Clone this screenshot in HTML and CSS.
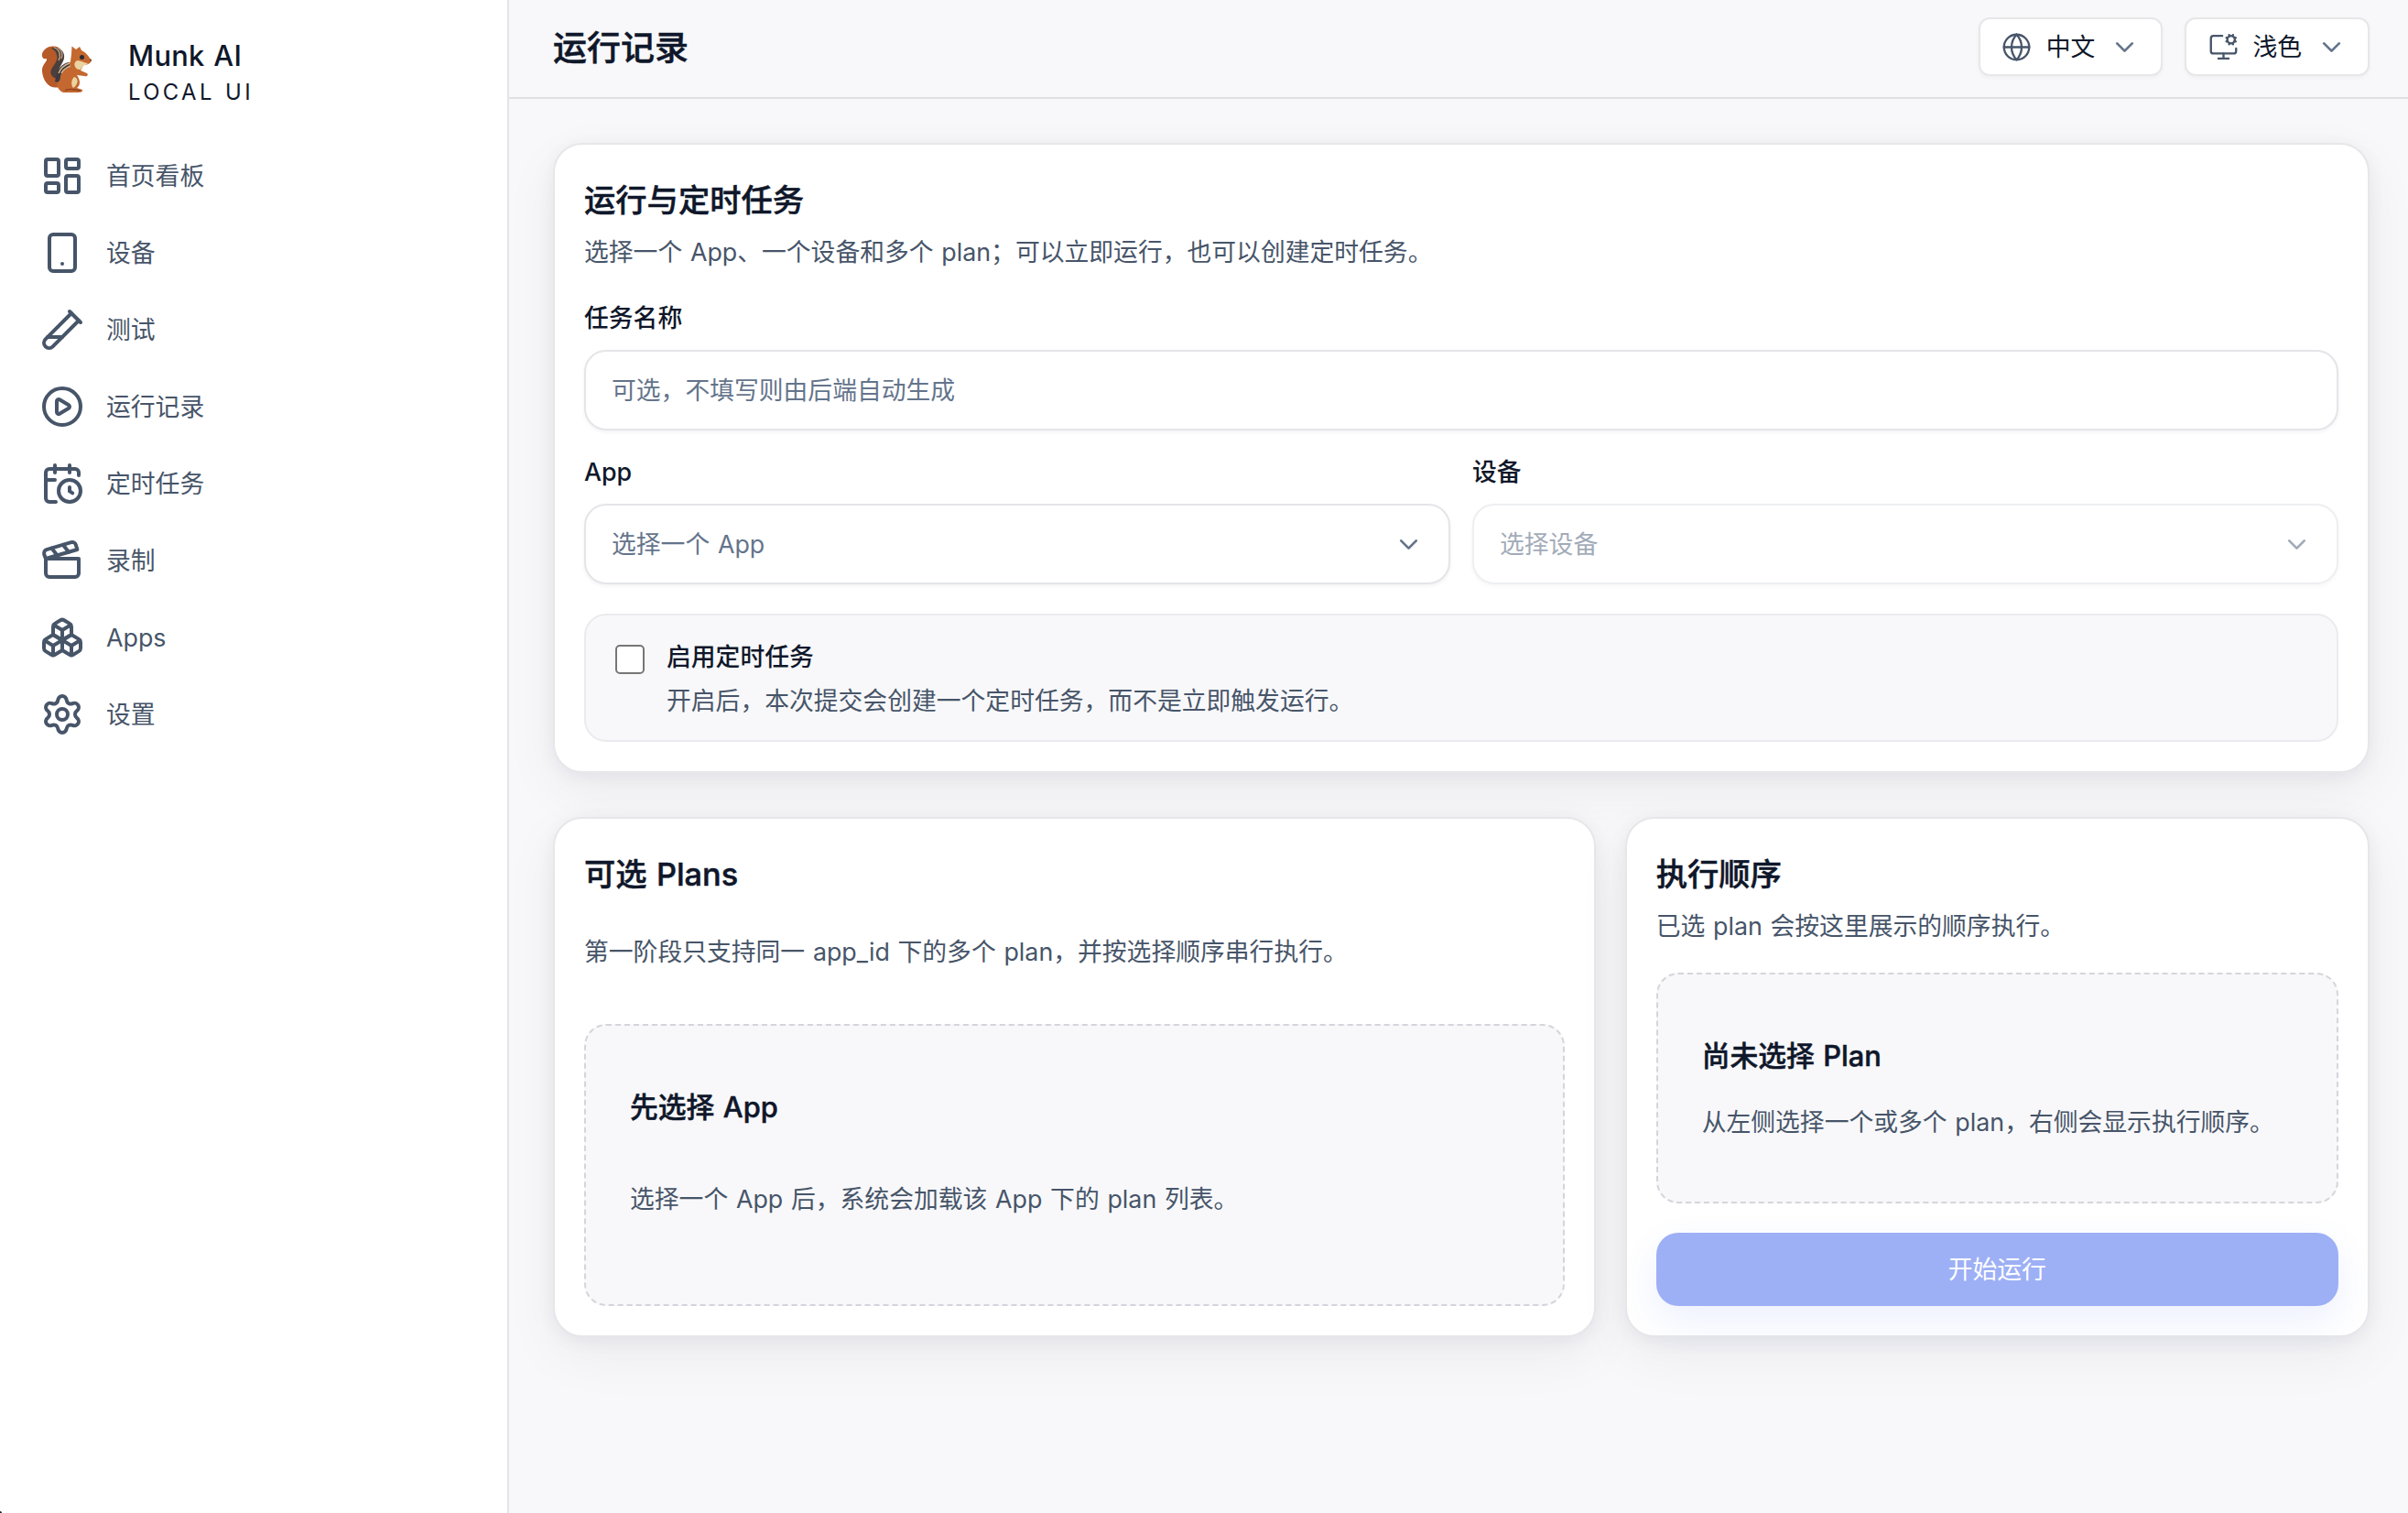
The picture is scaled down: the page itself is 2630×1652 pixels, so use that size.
FILE: index.html
```html
<!DOCTYPE html>
<html lang="zh-CN">
<head>
<meta charset="utf-8">
<title>Munk AI</title>
<link rel="stylesheet" href="styles.css">
</head>
<body>
<div class="app">
  <aside class="sidebar">
    <div class="brand">
      <svg class="brand-logo" viewBox="0 0 60 60">
        <path d="M23 49C12 52 5 43 4 32C3 25 10 21 9 18C4 20 2 13 6 9C11 3 22 3 26 10C30 17 24 24 20 31C17 38 22 42 23 49Z" fill="#b65a2a"/>
        <path d="M14 7C20 4 27 8 28 14C29 21 24 24 22 31L21 40C15 39 12 35 14 30C17 24 22 20 20 14C19 10 17 8 14 7Z" fill="#4a3f3c"/>
        <path d="M17 6C23 8 25 14 22 20M21 6C26 9 27 14 25 18" fill="none" stroke="#c9a98a" stroke-width="1.3"/>
        <path d="M36 13L36.500 4.500L41 8L45 5L47 9C52 11 55 16 58 20C57 24 52 25 49 25L46 31L53 34C55 36 53 38 50 37L42 36C46 42 46 47 42 50L48 52C49 55 44 55 40 55H27C20 52 19 45 22 38C25 29 33 26 35 21Z" fill="#c4682f"/>
        <path d="M42 20C47 20 50 23 54 23C51 26 48 25 46 30C41 31 38 25 40 22ZM39 38C44 39 44 46 38 50C35 46 36 41 39 38Z" fill="#ecd2a0"/>
        <path d="M34 22C28 22 22 28 20 34L18 43C22 45 24 42 24 37C26 31 31 29 34 27Z" fill="#3d3a40"/>
        <path d="M34 23C28 25 24 29 22 34M35 26C30 28 27 30 25 34" fill="none" stroke="#d9b58c" stroke-width="1.400"/>
        <path d="M29 53C33 50 39 52 46 53" fill="none" stroke="#8f431f" stroke-width="1.500"/>
        <circle cx="47.500" cy="16.500" r="2.500" fill="#2a2b35"/>
        <circle cx="57" cy="19.500" r="1" fill="#5f3b30"/>
      </svg>
      <div class="brand-text">
        <div class="brand-name">Munk AI</div>
        <div class="brand-sub">LOCAL UI</div>
      </div>
    </div>
    <nav class="nav">
      <a class="nav-item"><svg class="icon" viewBox="0 0 24 24"><rect width="7" height="9" x="3" y="3" rx="1"/><rect width="7" height="5" x="14" y="3" rx="1"/><rect width="7" height="9" x="14" y="12" rx="1"/><rect width="7" height="5" x="3" y="16" rx="1"/></svg><span>首页看板</span></a>
      <a class="nav-item"><svg class="icon" viewBox="0 0 24 24"><rect width="14" height="20" x="5" y="2" rx="2"/><path d="M12 18h.01"/></svg><span>设备</span></a>
      <a class="nav-item"><svg class="icon" viewBox="0 0 24 24"><path d="M21 7 6.820 21.180a2.830 2.830 0 0 1-3.990-.010a2.830 2.830 0 0 1 0-4L17 3"/><path d="m16 2 6 6"/><path d="M12 16H4"/></svg><span>测试</span></a>
      <a class="nav-item"><svg class="icon" viewBox="0 0 24 24"><circle cx="12" cy="12" r="10"/><path d="M9 9.003a1 1 0 0 1 1.517-.859l4.997 2.997a1 1 0 0 1 0 1.718l-4.997 2.997A1 1 0 0 1 9 14.996z"/></svg><span>运行记录</span></a>
      <a class="nav-item"><svg class="icon" viewBox="0 0 24 24"><path d="M16 14v2.200l1.600 1"/><path d="M16 2v4"/><path d="M21 7.500V6a2 2 0 0 0-2-2H5a2 2 0 0 0-2 2v14a2 2 0 0 0 2 2h3.500"/><path d="M3 10h5"/><path d="M8 2v4"/><circle cx="16" cy="16" r="6"/></svg><span>定时任务</span></a>
      <a class="nav-item"><svg class="icon" viewBox="0 0 24 24"><path d="M20.200 6 3 11l-.900-2.400c-.300-1.100.300-2.200 1.300-2.500l13.500-4c1.100-.300 2.200.300 2.500 1.300Z"/><path d="m6.200 5.300 3.100 3.900"/><path d="m12.400 3.400 3.100 4"/><path d="M3 11h18v8a2 2 0 0 1-2 2H5a2 2 0 0 1-2-2Z"/></svg><span>录制</span></a>
      <a class="nav-item"><svg class="icon" viewBox="0 0 24 24"><path d="M2.970 12.920A2 2 0 0 0 2 14.630v3.240a2 2 0 0 0 .970 1.710l3 1.800a2 2 0 0 0 2.060 0L12 19v-5.500l-5-3-4.030 2.420Z"/><path d="m7 16.500-4.740-2.850"/><path d="m7 16.500 5-3"/><path d="M7 16.500v5.170"/><path d="M12 13.500V19l3.970 2.380a2 2 0 0 0 2.060 0l3-1.800a2 2 0 0 0 .970-1.710v-3.240a2 2 0 0 0-.970-1.710L17 10.500l-5 3Z"/><path d="m17 16.500-5-3"/><path d="m17 16.500 4.740-2.850"/><path d="M17 16.500v5.170"/><path d="M7.970 4.420A2 2 0 0 0 7 6.130v4.370l5 3 5-3V6.130a2 2 0 0 0-.970-1.710l-3-1.800a2 2 0 0 0-2.060 0l-3 1.800Z"/><path d="M12 8 7.260 5.150"/><path d="m12 8 4.740-2.850"/><path d="M12 13.500V8"/></svg><span>Apps</span></a>
      <a class="nav-item"><svg class="icon" viewBox="0 0 24 24"><path d="M9.671 4.136a2.340 2.340 0 0 1 4.659 0 2.340 2.340 0 0 0 3.319 1.915 2.340 2.340 0 0 1 2.330 4.033 2.340 2.340 0 0 0 0 3.831 2.340 2.340 0 0 1-2.330 4.033 2.340 2.340 0 0 0-3.319 1.915 2.340 2.340 0 0 1-4.659 0 2.340 2.340 0 0 0-3.320-1.915 2.340 2.340 0 0 1-2.330-4.033 2.340 2.340 0 0 0 0-3.831A2.340 2.340 0 0 1 6.350 6.051a2.340 2.340 0 0 0 3.319-1.915"/><circle cx="12" cy="12" r="3"/></svg><span>设置</span></a>
    </nav>
  </aside>
  <div class="main">
    <header class="topbar">
      <h1 class="page-title">运行记录</h1>
      <div class="topbar-actions">
        <div class="picker"><svg class="icon icon-sm" viewBox="0 0 24 24"><circle cx="12" cy="12" r="10"/><path d="M12 2a14.500 14.500 0 0 0 0 20 14.500 14.500 0 0 0 0-20"/><path d="M2 12h20"/></svg><span>中文</span><svg class="icon icon-sm chevron" viewBox="0 0 24 24"><path d="m6 9 6 6 6-6"/></svg></div>
        <div class="picker"><svg class="icon icon-sm" viewBox="0 0 24 24"><path d="M12 17v4"/><path d="m14.305 7.530.923-.382"/><path d="m15.228 4.852-.923-.383"/><path d="m16.852 3.228-.383-.924"/><path d="m16.852 8.772-.383.923"/><path d="m19.148 3.228.383-.924"/><path d="m19.530 9.696-.382-.924"/><path d="m20.772 4.852.924-.383"/><path d="m20.772 7.148.924.383"/><path d="M22 13v2a2 2 0 0 1-2 2H4a2 2 0 0 1-2-2V5a2 2 0 0 1 2-2h7"/><path d="M8 21h8"/><circle cx="18" cy="6" r="3"/></svg><span>浅色</span><svg class="icon icon-sm chevron" viewBox="0 0 24 24"><path d="m6 9 6 6 6-6"/></svg></div>
      </div>
    </header>
    <main class="content">
      <section class="card">
        <h2 class="card-title">运行与定时任务</h2>
        <p class="text">选择一个 App、一个设备和多个 plan；可以立即运行，也可以创建定时任务。</p>
        <div class="field">
          <div class="label">任务名称</div>
          <div class="control">可选，不填写则由后端自动生成</div>
        </div>
        <div class="field-row">
          <div class="field">
            <div class="label">App</div>
            <div class="control"><span>选择一个 App</span><svg class="icon icon-sm chevron" viewBox="0 0 24 24"><path d="m6 9 6 6 6-6"/></svg></div>
          </div>
          <div class="field">
            <div class="label">设备</div>
            <div class="control disabled"><span>选择设备</span><svg class="icon icon-sm chevron" viewBox="0 0 24 24"><path d="m6 9 6 6 6-6"/></svg></div>
          </div>
        </div>
        <div class="notice">
          <span class="checkbox"></span>
          <div>
            <div class="notice-title">启用定时任务</div>
            <div class="notice-text">开启后，本次提交会创建一个定时任务，而不是立即触发运行。</div>
          </div>
        </div>
      </section>
      <div class="columns">
        <section class="card">
          <h2 class="card-title">可选 Plans</h2>
          <p class="text text-spaced">第一阶段只支持同一 app_id 下的多个 plan，并按选择顺序串行执行。</p>
          <div class="empty empty-tall">
            <h3 class="empty-title">先选择 App</h3>
            <p class="text">选择一个 App 后，系统会加载该 App 下的 plan 列表。</p>
          </div>
        </section>
        <section class="card">
          <h2 class="card-title">执行顺序</h2>
          <p class="text">已选 plan 会按这里展示的顺序执行。</p>
          <div class="empty">
            <h3 class="empty-title">尚未选择 Plan</h3>
            <p class="text">从左侧选择一个或多个 plan，右侧会显示执行顺序。</p>
          </div>
          <div class="submit">开始运行</div>
        </section>
      </div>
    </main>
  </div>
</div>
</body>
</html>
```
FILE: styles.css
```css
* { box-sizing: border-box; }
body {
  margin: 0;
  font-family: Inter, "Noto Sans CJK SC", sans-serif;
  font-size: 26.8px;
  line-height: 40px;
  word-spacing: 1.2px;
  color: #0f172a;
  background: #f8f8fa;
}
h1, h2, h3, p { margin: 0; }
.app { position: relative; display: flex; height: 1652px; overflow: hidden; }
/* Dark window corner */
.app::after {
  content: "";
  position: absolute;
  left: 0;
  bottom: 0;
  width: 2px;
  height: 2px;
  background: #1d1d35;
  border-top-right-radius: 2px;
}
.icon {
  display: block;
  flex: none;
  width: 48px;
  height: 48px;
  fill: none;
  stroke: currentColor;
  stroke-width: 2;
  stroke-linecap: round;
  stroke-linejoin: round;
}
.icon-sm { width: 33px; height: 33px; margin: 0 -0.5px; stroke-width: 1.7; }
.chevron { color: #64748b; stroke-width: 2; }

/* Sidebar */
.sidebar {
  flex: none;
  width: 556px;
  padding: 36px 42px;
  background: #fff;
  border-right: 2px solid #e4e4e7;
}
.brand { display: flex; height: 114px; }
.brand-logo { width: 60px; height: 60px; margin: 10px 38px 0 0; }
.brand-name { font-size: 30.8px; line-height: 50px; font-weight: 500; letter-spacing: 0.3px; }
.brand-sub { font-size: 23.8px; line-height: 30px; letter-spacing: 3.4px; }
.nav { color: #475569; }
.nav-item { display: flex; align-items: center; gap: 24px; height: 84px; padding-left: 2px; }

/* Top bar */
.main { flex: 1; min-width: 0; }
.topbar {
  display: flex;
  align-items: center;
  justify-content: space-between;
  height: 108px;
  padding: 0 42px 0 48px;
  border-bottom: 2px solid #e1e1e5;
}
.page-title, .card-title, .empty-title {
  font-weight: 500;
  -webkit-text-stroke: 0.5px currentColor;
}
.page-title { font-size: 37px; line-height: 56px; }
.topbar-actions { display: flex; gap: 24px; padding-bottom: 4px; }
.picker {
  display: flex;
  align-items: center;
  gap: 16px;
  height: 64px;
  padding: 0 24px;
  background: #fff;
  border: 2px solid #e7e7ea;
  border-radius: 12px;
  box-shadow: 0 2px 4px rgba(15, 23, 42, 0.04);
}
.picker .icon:first-child { color: #475569; }

/* Cards */
.content { padding: 48px 42px 0 48px; }
.card {
  padding: 32px;
  background: #fff;
  border: 2px solid #e7e7ea;
  border-radius: 32px;
  box-shadow: 0 20px 60px rgba(15, 15, 60, 0.055), 0 4px 20px rgba(15, 15, 50, 0.055);
}
.card-title { font-size: 34.3px; line-height: 58px; }
.text { line-height: 54px; color: #475569; white-space: nowrap; }
.columns { display: grid; grid-template-columns: 1.4fr 1fr; gap: 32px; margin-top: 48px; }

/* Form */
.field { margin-top: 24px; }
.field-row { display: grid; grid-template-columns: 1fr 1fr; gap: 24px; }
.label { line-height: 42px; font-weight: 500; }
.control {
  display: flex;
  align-items: center;
  justify-content: space-between;
  height: 88px;
  margin-top: 14px;
  padding: 0 28px;
  color: #64748b;
  background: #fff;
  border: 2px solid #e4e5e8;
  border-radius: 24px;
  box-shadow: 0 2px 4px rgba(15, 23, 42, 0.05);
}
.disabled { opacity: 0.6; }
.notice {
  display: flex;
  gap: 24px;
  height: 140px;
  margin-top: 32px;
  padding: 21px 32px 0;
  background: #f8f8fa;
  border: 2px solid #ebebef;
  border-radius: 24px;
}
.checkbox {
  width: 32px;
  height: 32px;
  margin-top: 11px;
  background: #fff;
  border: 2px solid #767676;
  border-radius: 5px;
}
.notice-title { line-height: 48px; font-weight: 500; }
.notice-text { line-height: 48px; color: #475569; }

/* Empty states */
.text-spaced { margin-top: 28px; margin-bottom: 52px; }
.empty {
  height: 252px;
  margin-top: 24px;
  padding: 66px 48px 0;
  background: #f8f8fa;
  border: 2px dashed #d4d5dc;
  border-radius: 24px;
}
.empty-title { margin-bottom: 22px; font-size: 30.8px; line-height: 46px; }
.empty-tall { height: 308px; }
.empty-tall .empty-title { margin-bottom: 50px; }
.submit {
  display: flex;
  align-items: center;
  justify-content: center;
  height: 80px;
  margin-top: 32px;
  color: #fff;
  background: #9db0f6;
  border-radius: 24px;
  box-shadow: 0 16px 40px rgba(79, 110, 247, 0.1);
}
```
